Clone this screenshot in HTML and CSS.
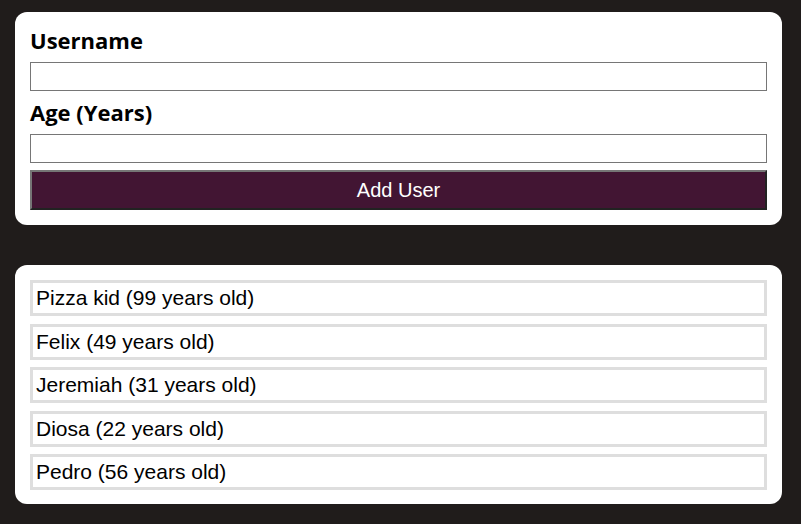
FILE: index.html
```html
<!DOCTYPE html>
<html>
<head>
<meta charset="utf-8">
<link rel="stylesheet" href="styles.css">
</head>
<body>
<div class="page">
  <form class="card form-card">
    <label class="label" for="username">Username</label>
    <input class="input" id="username" type="text">
    <label class="label" for="age">Age (Years)</label>
    <input class="input" id="age" type="number">
    <button class="btn" type="button">Add User</button>
  </form>
  <div class="card list-card">
    <ul class="users">
      <li class="user">Pizza kid (99 years old)</li>
      <li class="user">Felix (49 years old)</li>
      <li class="user">Jeremiah (31 years old)</li>
      <li class="user">Diosa (22 years old)</li>
      <li class="user">Pedro (56 years old)</li>
    </ul>
  </div>
</div>
</body>
</html>
```
FILE: styles.css
```css
html, body {
  margin: 0;
  padding: 0;
  background: #201c1b;
}
body {
  font-family: "Liberation Sans", Arial, sans-serif;
}
.page {
  padding: 12px 0 0 15px;
  width: 767px;
}
.card {
  background: #ffffff;
  border-radius: 12px;
  padding: 15px;
  box-sizing: border-box;
  width: 767px;
}
.form-card {
  display: flex;
  flex-direction: column;
  margin: 0;
}
.label {
  display: block;
  font-family: "Open Sans", sans-serif;
  font-weight: 700;
  font-size: 22px;
  line-height: 27px;
  margin-bottom: 8px;
  color: #000;
}
.input {
  display: block;
  box-sizing: border-box;
  width: 100%;
  height: 29px;
  margin: 0 0 8px 0;
  border: 1px solid #767676;
  padding: 0 4px;
  font: inherit;
  background: #fff;
}
.btn {
  display: block;
  box-sizing: border-box;
  width: 100%;
  height: 40px;
  margin-top: -1px;
  background: #421533;
  color: #fff;
  border-width: 2px;
  border-style: solid;
  border-color: #767676 #222222 #222222 #767676;
  font-family: "Liberation Sans", Arial, sans-serif;
  font-size: 20px;
  padding: 0;
}
.list-card {
  margin-top: 40px;
  padding-bottom: 14px;
}
.users {
  list-style: none;
  margin: 0;
  padding: 0;
  display: flex;
  flex-direction: column;
  gap: 7.5px;
}
.user {
  border: 3px solid #dedede;
  padding: 3px 3px;
  font-size: 21px;
  line-height: 24px;
  color: #000;
}
```
